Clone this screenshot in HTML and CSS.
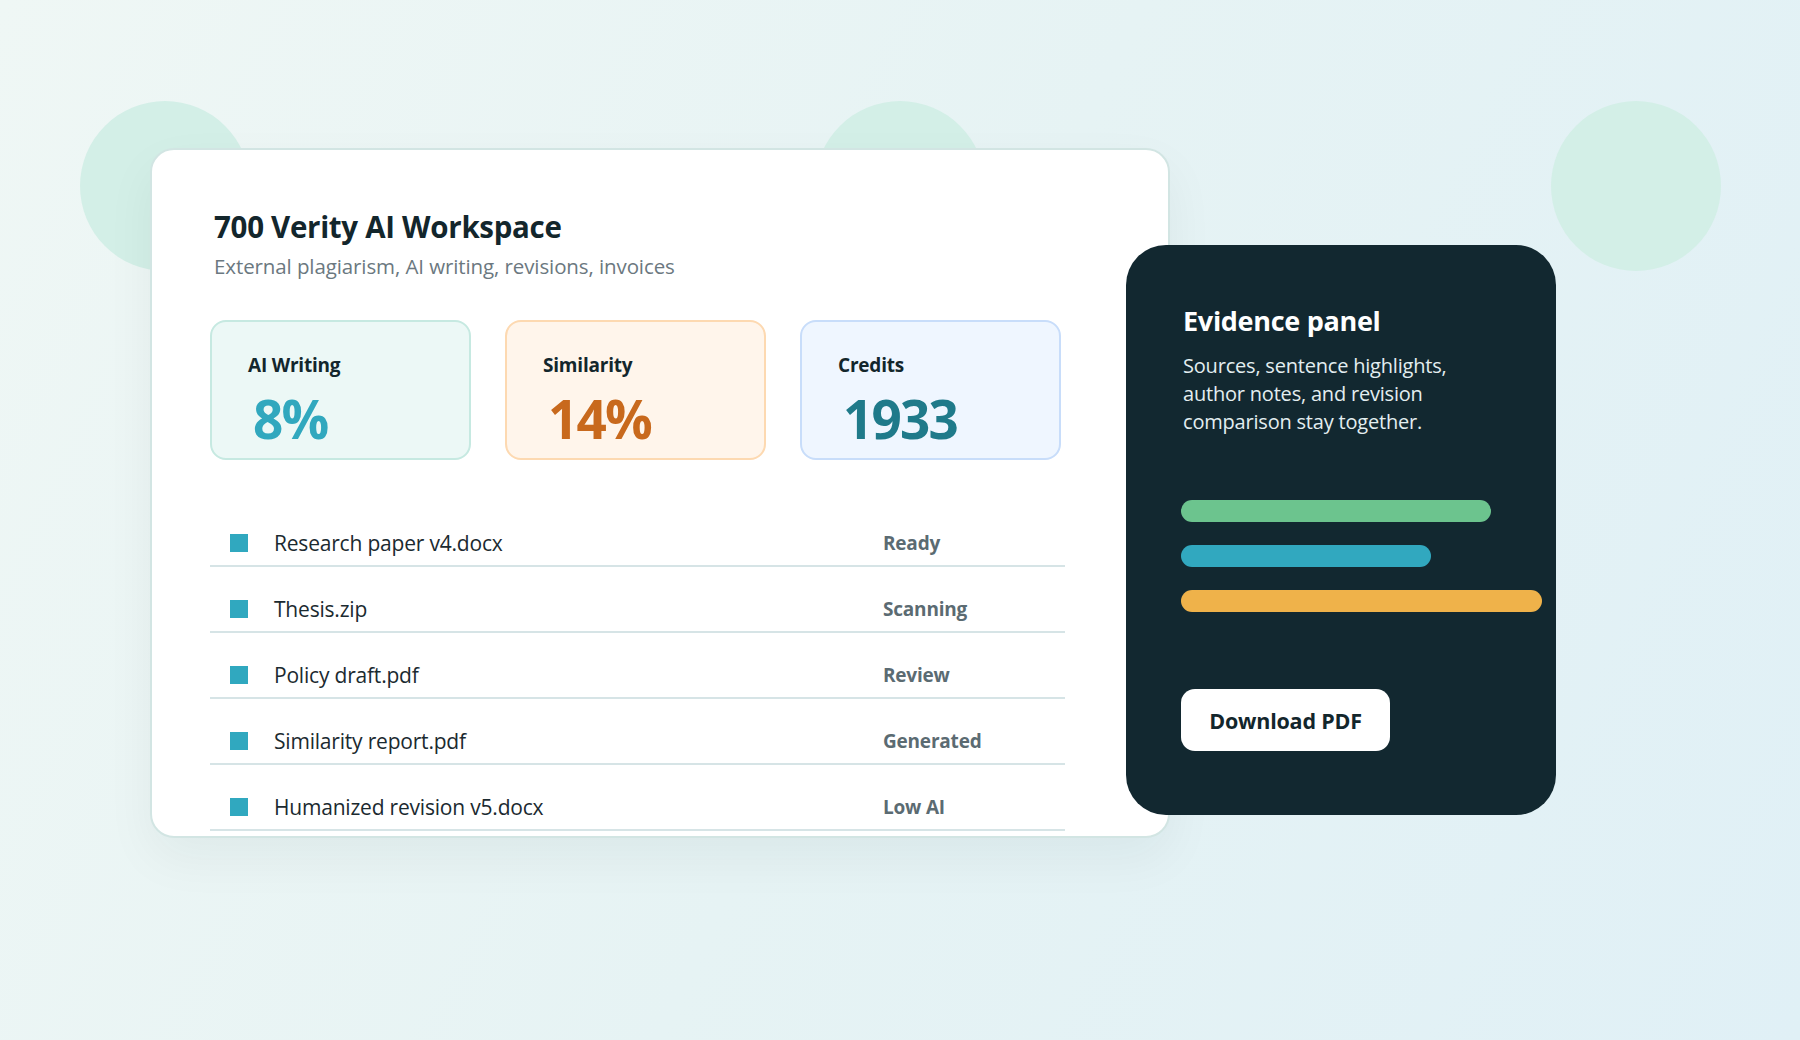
FILE: index.html
```html
<!DOCTYPE HTML>
<html>
<head>
	<meta http-equiv="Content-Type" content="text/html; charset=utf-8">
	<title>700 Verity AI Workspace</title>
	<link rel="stylesheet" href="styles.css">
</head>
<body>
	<div class="page">
		<!-- background dots -->
		<span class="blob blob-a"></span>
		<span class="blob blob-b"></span>
		<span class="blob blob-c"></span>

		<div class="stage">
			<main class="workspace">
				<h1>700 Verity AI Workspace</h1>
				<p class="sub">External plagiarism, AI writing, revisions, invoices</p>

				<section class="stats">
					<div class="stat ai">
						<label>AI Writing</label>
						<strong>8%</strong>
					</div>
					<div class="stat sim">
						<label>Similarity</label>
						<strong>14%</strong>
					</div>
					<div class="stat cred">
						<label>Credits</label>
						<strong>1933</strong>
					</div>
				</section>

				<ul class="files">
					<li><i></i><span>Research paper v4.docx</span><b>Ready</b></li>
					<li><i></i><span>Thesis.zip</span><b>Scanning</b></li>
					<li><i></i><span>Policy draft.pdf</span><b>Review</b></li>
					<li><i></i><span>Similarity report.pdf</span><b>Generated</b></li>
					<li><i></i><span>Humanized revision v5.docx</span><b>Low AI</b></li>
				</ul>
			</main>

			<aside class="evidence">
				<h2>Evidence panel</h2>
				<p>Sources, sentence highlights, author notes, and revision comparison stay together.</p>
				<div class="bars">
					<span class="bar green"></span>
					<span class="bar teal"></span>
					<span class="bar amber"></span>
				</div>
				<button>Download PDF</button>
			</aside>
		</div>
	</div>
</body>
</html>
```
FILE: styles.css
```css
body{
	margin: 0;
	font-family: "Open Sans", Lato, sans-serif;
	color: #13262c;
}
.page{
	position: relative;
	height: 1040px;
	overflow: hidden;
	background: linear-gradient(115deg, #eff7f5 0%, #e6f3f4 50%, #e0f0f6 100%);
}

.blob{
	position: absolute;
	top: 101px;
	width: 170px;
	height: 170px;
	border-radius: 50%;
	background: #d3efe7;
}
.blob-a{ left: 80px; }
.blob-b{ left: 815px; }
.blob-c{ left: 1551px; }

.stage{
	position: relative;
	display: flex;
	align-items: flex-start;
	padding: 148px 0 0 150px;
}

.workspace{
	box-sizing: border-box;
	width: 1020px;
	height: 690px;
	padding: 59px 0 0 58px;
	background: #fff;
	border: 2px solid #d2e5e3;
	border-radius: 24px;
	box-shadow: 0 20px 50px rgba(18, 40, 48, 0.05);
	overflow: hidden;
}
.workspace h1{
	margin: 0;
	font-size: 29.5px;
	line-height: 36px;
	font-weight: 700;
	letter-spacing: -0.3px;
	padding-left: 4px;
}
.sub{
	margin: 7px 0 0 4px;
	font-size: 20.5px;
	line-height: 28px;
	color: #6b7880;
	letter-spacing: -0.1px;
}

.stats{
	display: grid;
	grid-template-columns: repeat(3, 261px);
	gap: 34px;
	margin-top: 40px;
}
.stat{
	box-sizing: border-box;
	height: 140px;
	padding: 31px 0 0 36px;
	border: 2px solid;
	border-radius: 16px;
}
.stat label{
	display: block;
	font-size: 19px;
	line-height: 24px;
	font-weight: 700;
	letter-spacing: -0.2px;
}
.stat strong{
	display: block;
	margin-top: 12px;
	padding-left: 5px;
	font-size: 53px;
	line-height: 60px;
	font-weight: 700;
	letter-spacing: -1.8px;
}
.stat.ai{ background: #ecf8f6; border-color: #c6e9e1; }
.stat.ai strong{ color: #31a8be; }
.stat.sim{ background: #fff5eb; border-color: #fdd9b1; }
.stat.sim strong{ color: #c8691d; }
.stat.cred{ background: #eff6ff; border-color: #c8ddfa; }
.stat.cred strong{ color: #1f7a8a; }

.files{
	list-style: none;
	width: 855px;
	margin: 41px 0 0;
	padding: 0;
}
.files li{
	display: flex;
	align-items: center;
	padding: 30px 0 10px;
	border-bottom: 2px solid #d6e4e6;
	line-height: 24px;
}
.files i{
	width: 18px;
	height: 18px;
	margin: 0 26px 0 20px;
	background: #30a8bf;
}
.files span{
	flex: 1;
	font-size: 21px;
	color: #1b2a30;
	letter-spacing: -0.2px;
}
.files b{
	width: 182px;
	font-size: 19px;
	color: #5b6b72;
	letter-spacing: -0.2px;
}

.evidence{
	flex: none;
	box-sizing: border-box;
	width: 430px;
	height: 570px;
	margin: 97px 0 0 -44px;
	padding: 58px 0 0 55px;
	background: #122830;
	border-radius: 40px;
	color: #fff;
}
.evidence h2{
	margin: 0;
	padding-left: 2px;
	font-size: 27px;
	line-height: 36px;
	font-weight: 700;
	letter-spacing: -0.3px;
}
.evidence p{
	width: 310px;
	margin: 13px 0 0 2px;
	font-size: 20px;
	line-height: 28px;
	color: #e3eef0;
	letter-spacing: -0.2px;
}

.bars{
	display: flex;
	flex-direction: column;
	gap: 23px;
	margin-top: 64px;
}
.bar{
	display: block;
	height: 22px;
	border-radius: 11px;
}
.bar.green{ width: 310px; background: #6cc48e; }
.bar.teal{ width: 250px; background: #31a8bf; }
.bar.amber{ width: 361px; background: #efb24a; }

.evidence button{
	margin-top: 77px;
	width: 209px;
	height: 62px;
	border: 0;
	border-radius: 14px;
	background: #fff;
	font-family: inherit;
	font-size: 21.5px;
	font-weight: 700;
	color: #13262c;
	letter-spacing: -0.2px;
}
```
